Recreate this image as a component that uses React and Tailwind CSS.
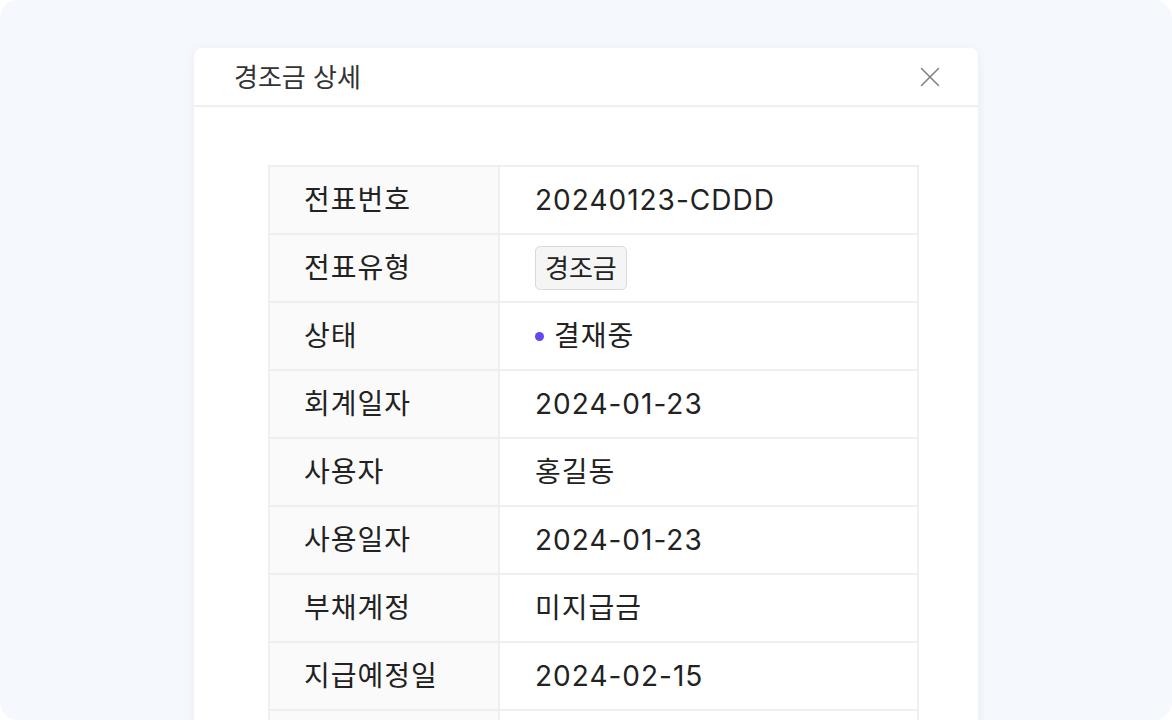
import { X } from 'lucide-react';

const rows = [
  { label: '전표번호', value: '20240123-CDDD' },
  { label: '전표유형', type: 'badge', value: '경조금' },
  { label: '상태', type: 'status', value: '결재중' },
  { label: '회계일자', value: '2024-01-23' },
  { label: '사용자', value: '홍길동' },
  { label: '사용일자', value: '2024-01-23' },
  { label: '부채계정', value: '미지급금' },
  { label: '지급예정일', value: '2024-02-15' },
  { label: '', value: '' },
];

function Value({ row }) {
  if (row.type === 'badge') {
    return (
      <span className="inline-flex items-center h-[44px] px-[9px] text-[26px] tracking-normal border border-[#dadada] bg-[#f5f5f5] rounded-[5px] text-[#222]">
        {row.value}
      </span>
    );
  }
  if (row.type === 'status') {
    return (
      <span className="inline-flex items-center gap-[10px]">
        <span className="w-[9px] h-[9px] rounded-full bg-[#6347f0]" />
        {row.value}
      </span>
    );
  }
  return row.value;
}

export default function App() {
  return (
    <div
      className="w-[1172px] h-[720px] bg-white"
      style={{ fontFamily: 'Inter, "Noto Sans CJK KR", sans-serif' }}
    >
      <div className="w-full h-full rounded-[18px] bg-[#f5f8fd] overflow-hidden pt-[48px] pl-[194px]">
        <div className="w-[784px] h-[700px] bg-white rounded-t-[8px] shadow-[0_2px_12px_rgba(30,50,90,0.06)]">
          {/* Header */}
          <div className="h-[59px] flex items-center justify-between pl-[40px] pr-[31px] border-b-2 border-[#f0f0f0]">
            <h2 className="text-[26px] text-[#333] font-normal pt-[2px]">경조금 상세</h2>
            <X className="w-[34px] h-[34px] text-[#808080]" strokeWidth={1.1} />
          </div>

          {/* Body */}
          <div className="pt-[58px] pl-[74px]">
            <div className="w-[651px] border-t-2 border-x-2 border-[#efefef]">
              {rows.map((row, i) => (
                <div key={i} className="flex h-[68px] border-b-2 border-[#efefef]">
                  <div className="w-[230px] shrink-0 bg-[#fafafa] border-r-2 border-[#efefef] flex items-center pl-[34px] text-[28px] tracking-[1px] text-[#222]">
                    {row.label}
                  </div>
                  <div className="flex-1 flex items-center pl-[35px] text-[28px] tracking-[1px] text-[#222]">
                    <Value row={row} />
                  </div>
                </div>
              ))}
            </div>
          </div>
        </div>
      </div>
    </div>
  );
}
